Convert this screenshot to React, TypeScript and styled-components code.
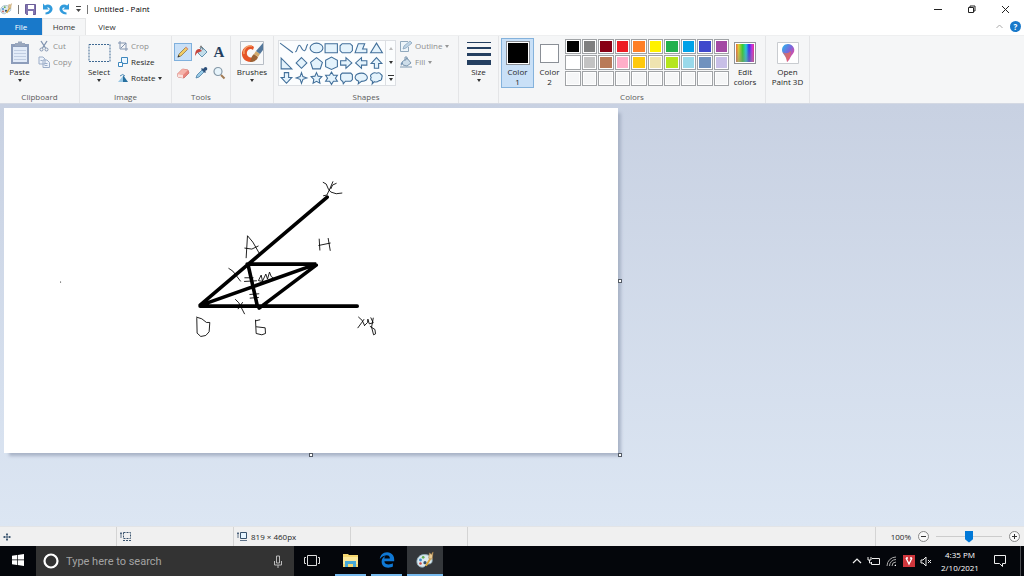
import React from "react";
import styled, { createGlobalStyle } from "styled-components";
import { FaEdgeLegacy } from "react-icons/fa";

const GlobalStyle = createGlobalStyle`
  * { box-sizing: border-box; }
  body { margin: 0; font-family: "Open Sans", "Noto Sans", sans-serif; font-size: 8px; line-height: 10px; color: #262626; }
  button, input { font: inherit; color: inherit; margin: 0; }
  button { padding: 0; border: 0; background: none; }
  svg { display: block; flex: none; }
  h2 { margin: 0; font-weight: 400; }
`;

const Window = styled.div`
  display: flex;
  flex-direction: column;
  min-height: 100vh;
  background: #fff;
`;

const TitleBar = styled.header`
  display: flex;
  align-items: center;
  height: 18px;
  padding-right: 2px;
  background: #fff;
`;

const QuickAccess = styled.div`
  display: flex;
  align-items: center;
  gap: 6px;
  flex: 1;
`;

const Divider = styled.span`
  width: 1px;
  height: 9px;
  background: #777;
`;

const Title = styled.h1`
  margin: 0;
  font-size: 8px;
  font-weight: 400;
  color: #000;
`;

const IconButton = styled.button`
  display: grid;
  place-items: center;
`;

const WindowButton = styled(IconButton)`
  width: 34px;
  height: 16px;
`;

const TabRow = styled.nav`
  display: flex;
  height: 17px;
  align-items: stretch;
`;

const Tab = styled.button<{ $kind?: "file" | "active" }>`
  width: ${(p) => (p.$kind === "active" ? 44 : 42)}px;
  background: ${(p) => (p.$kind === "file" ? "#1979ca" : p.$kind === "active" ? "#f5f6f7" : "transparent")};
  color: ${(p) => (p.$kind === "file" ? "#fff" : "#333")};
  border: solid #e4e5e6;
  border-width: ${(p) => (p.$kind === "active" ? "1px 1px 0" : "0")};
`;

const TabEnd = styled.div`
  display: flex;
  align-items: center;
  gap: 7px;
  margin-left: auto;
  padding-right: 3px;
`;

const HelpButton = styled.button`
  width: 11px;
  height: 11px;
  border-radius: 50%;
  background: #1979ca;
  color: #fff;
  font-weight: 700;
`;

const Ribbon = styled.section`
  display: flex;
  height: 69px;
  background: #f5f6f7;
  border-top: 1px solid #eeeff0;
  border-bottom: 1px solid #d4d9e3;
`;

const Group = styled.section<{ $width: number }>`
  display: flex;
  flex-direction: column;
  flex: none;
  width: ${(p) => p.$width}px;
  padding-top: 2px;
  border-right: 1px solid #e4e5e7;
`;

const GroupBody = styled.div<{ $gap?: number; $center?: boolean }>`
  display: flex;
  flex: 1;
  align-items: flex-start;
  gap: ${(p) => p.$gap ?? 0}px;
  justify-content: ${(p) => (p.$center ? "center" : "flex-start")};
  padding: 0 2px;
`;

const ShapesBody = styled(GroupBody)`
  padding-left: 4px;
`;

const GroupLabel = styled.h2`
  height: 12px;
  font-size: 8px;
  line-height: 11px;
  text-align: center;
  color: #5a5a5a;
`;

const Caret = styled.span`
  width: 0;
  border: 2px solid transparent;
  border-top: 3px solid #333;
  border-bottom: 0;
`;

const BigButton = styled.button<{ $selected?: boolean; $width?: number }>`
  display: flex;
  flex-direction: column;
  align-items: center;
  width: ${(p) => p.$width ?? 36}px;
  height: 50px;
  padding-top: 1px;
  border: 1px solid ${(p) => (p.$selected ? "#84b2dc" : "transparent")};
  background: ${(p) => (p.$selected ? "#c9e0f7" : "transparent")};
  white-space: nowrap;
  ${Caret} { margin-top: 2px; }
`;

const BigIcon = styled.span`
  display: grid;
  place-items: center;
  height: 26px;
  margin-bottom: 1px;
`;

const SmallList = styled.div`
  display: flex;
  flex-direction: column;
`;

const SmallButton = styled.button<{ $muted?: boolean }>`
  display: flex;
  align-items: center;
  gap: 3px;
  height: 16px;
  color: ${(p) => (p.$muted ? "#8d8d8d" : "#262626")};
  white-space: nowrap;
  ${Caret} { opacity: ${(p) => (p.$muted ? 0.5 : 1)}; }
`;

const ToolGrid = styled.div`
  display: grid;
  grid-template-columns: repeat(3, 18px);
  grid-template-rows: 18px 18px;
  row-gap: 3px;
  padding-top: 5px;
`;

const ToolButton = styled(IconButton)<{ $selected?: boolean }>`
  border: 1px solid ${(p) => (p.$selected ? "#7fb0dd" : "transparent")};
  background: ${(p) => (p.$selected ? "#c9e0f7" : "transparent")};
`;

const TextGlyph = styled.span`
  font: 700 15px/16px "Liberation Serif", serif;
  color: #243f60;
`;

const Gallery = styled.div`
  display: flex;
  width: 118px;
  height: 46px;
  margin-top: 2px;
  border: 1px solid #dcdfe3;
  background: #fbfdfe;
`;

const ShapeGrid = styled.div`
  display: grid;
  flex: 1;
  grid-template-columns: repeat(7, 15px);
  grid-auto-rows: 15px;
`;

const GalleryScroll = styled.div`
  display: grid;
  grid-template-rows: repeat(3, 1fr);
  width: 10px;
  border-left: 1px solid #dcdfe3;
`;

const LineStack = styled.span`
  display: flex;
  flex-direction: column;
  gap: 4px;
  width: 24px;
`;

const Line = styled.span<{ $size: number }>`
  height: ${(p) => p.$size}px;
  background: #243f60;
`;

const Swatch = styled.span<{ $color: string; $size: number }>`
  width: ${(p) => p.$size}px;
  height: ${(p) => p.$size}px;
  border: 1px solid #8a8f96;
  background: ${(p) => p.$color};
  box-shadow: inset 0 0 0 1px #fff;
`;

const Palette = styled.div`
  display: grid;
  grid-template-columns: repeat(10, 1fr);
  grid-auto-rows: 15px;
  gap: 1px;
  width: 164px;
  padding-top: 1px;
`;

const PaletteColor = styled.button<{ $color: string }>`
  border: 1px solid #a0a3a6;
  background: ${(p) => p.$color};
  box-shadow: inset 0 0 0 1px #fff;
`;

const Spectrum = styled.span`
  width: 22px;
  height: 22px;
  border: 1px solid #8f9499;
  box-shadow: inset 0 0 0 1px #fff;
  background: linear-gradient(transparent 20%, #8888), linear-gradient(90deg, #e44, #dc3 18%, #3c3 38%, #2cd 55%, #33e 70%, #c3d 86%, #e35);
`;

const Workspace = styled.main`
  flex: 1;
  padding: 4px;
  background: linear-gradient(#c8d1e2, #dce6f3);
`;

const Paper = styled.div`
  position: relative;
  width: 60vw;
  aspect-ratio: 614 / 345;
  background: #fff;
  box-shadow: 4px 4px 3px -1px #a9b4c7;
  > svg { width: 100%; height: 100%; }
`;

const Handle = styled.span<{ $edge: "right" | "bottom" | "corner" }>`
  position: absolute;
  width: 4px;
  height: 4px;
  border: 1px solid #555c66;
  background: #fff;
  left: ${(p) => (p.$edge === "bottom" ? "calc(50% - 2px)" : "100%")};
  top: ${(p) => (p.$edge === "right" ? "calc(50% - 2px)" : "100%")};
`;

const StatusBar = styled.footer`
  display: flex;
  height: 20px;
  background: #f0f0f0;
  border-top: 1px solid #e2e4e7;
`;

const StatusCell = styled.div`
  display: flex;
  align-items: center;
  gap: 4px;
  width: 117px;
  padding-left: 3px;
  border-right: 1px solid #d4d4d4;
`;

const ZoomControls = styled.div`
  display: flex;
  align-items: center;
  gap: 7px;
  margin-left: auto;
  padding: 0 4px 0 15px;
  border-left: 1px solid #d4d4d4;
`;

const ZoomSlider = styled.input`
  appearance: none;
  width: 66px;
  height: 12px;
  background: linear-gradient(#ccc, #ccc) center / 100% 1px no-repeat;
  &::-webkit-slider-thumb {
    appearance: none;
    width: 8px;
    height: 12px;
    background: #0078d7;
    clip-path: polygon(0 0, 100% 0, 100% 72%, 50% 100%, 0 72%);
  }
`;

const TaskBar = styled.footer`
  display: flex;
  height: 30px;
  background: #04060b;
  color: #fff;
`;

const TaskButton = styled(IconButton)<{ $open?: boolean; $active?: boolean }>`
  width: ${(p) => (p.$open && !p.$active ? 31 : 36)}px;
  background: ${(p) => (p.$active ? "#34373b" : "transparent")};
  border-bottom: 2px solid ${(p) => (p.$open ? "#76b9ed" : "transparent")};
`;

const TaskApps = styled.div`
  display: flex;
  gap: 5px;
`;

const Search = styled.label`
  display: flex;
  align-items: center;
  gap: 7px;
  width: 258px;
  padding: 0 11px 0 7px;
  background: #333;
`;

const SearchInput = styled.input`
  flex: 1;
  min-width: 0;
  padding: 0;
  border: 0;
  outline: 0;
  background: none;
  font-family: Roboto, sans-serif;
  font-size: 11px;
  &::placeholder { color: #a3a3a3; opacity: 1; }
`;

const Tray = styled.div`
  display: flex;
  align-items: center;
  gap: 5px;
  margin-left: auto;
  padding-right: 3px;
`;

const Clock = styled.time`
  width: 46px;
  margin-right: 6px;
  text-align: center;
  font-size: 8px;
  line-height: 13px;
`;

const TrayEdge = styled.span`
  align-self: stretch;
  width: 1px;
  margin-left: 9px;
  background: #4a4c50;
`;

type IconProps = { w: number; h?: number; box?: string; children: React.ReactNode };
const Icon = ({ w, h = w, box, children }: IconProps) => (
  <svg width={w} height={h} viewBox={box ?? `0 0 ${w} ${h}`} fill="none" stroke="none" aria-hidden="true">{children}</svg>
);

const PaletteIcon = ({ size }: { size: number }) => (
  <Icon w={size} box="0 0 20 20">
    <path d="M9 4C4 4 1 8 1 12c0 4 3 6 6 6 3 0 3-2 5-3 3-1 6 0 6-5 0-4-4-6-9-6Z" fill="#dce9ef" stroke="#8eabb8" />
    <circle cx="5" cy="10" r="1.6" fill="#3b8ad0" /><circle cx="8" cy="7" r="1.5" fill="#62ad54" />
    <circle cx="5" cy="14" r="1.4" fill="#c94b45" /><circle cx="10" cy="13" r="1.8" fill="#32506a" />
    <path d="m10 16 5-8 2 1-5 8Z" fill="#dba43a" /><path d="m14 8 1-6 2 2 2-3-1 8Z" fill="#e6c993" stroke="#a77d41" strokeWidth=".6" />
  </Icon>
);

const Undo = () => (
  <Icon w={11} h={12}><path d="M1 .5v6h6L5 4.700C7 4 8.300 5.500 7.300 7.300 6.500 8.800 5 9.300 3.500 9.500v2C8 11.500 11 8.500 10.500 5.300 10 1.800 5.700.5 2.900 2.500Z" fill="#319bdc" /></Icon>
);
const Redo = () => (
  <Icon w={11} h={12}><path d="M10 .5v6H4l2-1.800C4 4 2.700 5.500 3.700 7.300c.8 1.500 2.300 2 3.800 2.200v2C3 11.500 0 8.500.5 5.300 1 1.800 5.300.5 8.100 2.500Z" fill="#319bdc" /></Icon>
);

const shapes: { name: string; d: string }[] = [
  { name: "Line", d: "M2 3 14 12" },
  { name: "Curve", d: "M2 11C4 12 4 5 6 5s2 6 5 5c2-1 1-5 3-6" },
  { name: "Oval", d: "M2 7.500a6 4.500 0 1 0 12 0a6 4.500 0 1 0-12 0" },
  { name: "Rectangle", d: "M2 3.500H13.500V12H2Z" },
  { name: "Rounded rectangle", d: "M4 3.500h7.500l2 2V10l-2 2H4L2 10V5.500Z" },
  { name: "Polygon", d: "M5 3.500h6L9 8.500h4V12H2Z" },
  { name: "Triangle", d: "M8 3 13.500 12H2.500Z" },
  { name: "Right triangle", d: "M3 3 13 13H3Z" },
  { name: "Diamond", d: "m8 2.500 5 5-5 5-5-5Z" },
  { name: "Pentagon", d: "M8 2.500 13.500 7l-2 6h-7l-2-6Z" },
  { name: "Hexagon", d: "m2.500 5 5.500-3 5.500 3v6L8 13.500 2.500 11Z" },
  { name: "Right arrow", d: "M2.500 5.500h5v-3l5.500 5-5.500 5v-3h-5Z" },
  { name: "Left arrow", d: "M13 5.500H8v-3l-5.500 5 5.500 5v-3h5Z" },
  { name: "Up arrow", d: "M8 2.500 13 8h-3v4.500H6V8H3Z" },
  { name: "Down arrow", d: "M6 2.500h4V7h3l-5 5.500L3 7h3Z" },
  { name: "Four-point star", d: "m8 2.500 1.300 3.700L13 7.500 9.300 8.800 8 12.500 6.700 8.800 3 7.500l3.700-1.300Z" },
  { name: "Five-point star", d: "m8 2.500 1.500 3.300 3.500.4-2.500 2.600.7 3.700L8 10.700l-3.200 1.800.7-3.700L3 6.200l3.500-.4Z" },
  { name: "Six-point star", d: "m8 2 1.800 3h3.700l-1.800 2.700 1.800 2.800H9.800L8 13.500l-1.800-3H2.500l1.800-2.800L2.500 5h3.700Z" },
  { name: "Rounded callout", d: "M4 3h8l1.500 1.500V9L12 10.500H7L5 13l-.5-2.500H4L2.500 9V4.500Z" },
  { name: "Oval callout", d: "M5 13l.4-2.500C-.5 8.500 2 3 8 3s8.500 7.500 0 7.700Z" },
  { name: "Cloud callout", d: "M4 3.500q2-1.500 4-.5 3-1 4 1 2 1 1 3 0 3-2.500 3Q8 12 6 11l-2 2 .4-2.500Q1.500 9.500 3 7 1.500 5 4 3.500Z" },
];

const paletteColors = [
  "#000000", "#7f7f7f", "#880015", "#ed1c24", "#ff7f27", "#fff200", "#22b14c", "#00a2e8", "#3f48cc", "#a349a4",
  "#ffffff", "#c3c3c3", "#b97a57", "#ffaec9", "#ffc90e", "#efe4b0", "#b5e61d", "#99d9ea", "#7092be", "#c8bfe7",
  ...Array(10).fill("#f5f6f7"),
];

const Drawing = () => (
  <svg viewBox="4 108 614 345" role="img" aria-label="Angle xOy with parallelogram OAHB" fill="none" stroke="#000" strokeLinecap="round">
    <path strokeWidth="3.600" d="M200 305 327 197M200 306H357M247 264H316L201 305M248 265 257 305M316 265 259 308" />
    <g transform="translate(180 170) scale(.33333)" strokeWidth="2.600" strokeLinejoin="round">
      <path d="M198 263 202 197 218 216 237 249M194 234 215 237 234 228" />
      <path d="M429 37 438 42 445 58 452 66 468 71 485 69M430 77 440 75 450 54 458 35M468 40 457 45 452 56" />
      <path d="M417 207 419 240M416 226 450 219M444 205 450 241" />
      <path d="M146 295 158 303 181 333M181 299 170 311 158 324M194 323H219M193 334 229 332" />
      <path d="M235 331 243 315 247 333 257 312 262 327 268 306 273 319 284 327M237 332 248 334" />
      <path d="M209 373 236 371M210 384 235 382M166 388 176 398 193 431M187 397 174 416" />
      <path d="M50 445 51 489 62 499 77 496 87 485 89 457 79 457 65 446 49 441" />
      <path d="M226 450 228 490 245 494 256 490 255 473 229 470M227 452 239 449" />
      <path d="M535 441 546 451 553 466M551 448 544 458 533 473M553 466 562 457 563 447 567 461 579 458 572 443M579 444 574 471 580 494 586 491 584 478 570 469" />
    </g>
    <path strokeWidth="1" d="M60.500 282h.1" />
  </svg>
);

export default function App() {
  return (
    <>
      <GlobalStyle />
      <Window>
        <TitleBar>
          <QuickAccess>
            <PaletteIcon size={12} />
            <Divider />
            <IconButton aria-label="Save"><Icon w={11}><path d="M.5.5h10v10h-9l-1-1Z" fill="#8174ae" stroke="#6c5e9a" /><path d="M3 1h6v4H3ZM3 7h5v4H3Z" fill="#fff" /></Icon></IconButton>
            <IconButton aria-label="Undo"><Undo /></IconButton>
            <IconButton aria-label="Redo"><Redo /></IconButton>
            <IconButton aria-label="Customize toolbar"><Icon w={5} h={6}><path d="M0 .5h5" stroke="#444" /><path d="m0 3 2.500 3L5 3Z" fill="#444" /></Icon></IconButton>
            <Divider />
            <Title>Untitled - Paint</Title>
          </QuickAccess>
          <WindowButton aria-label="Minimize"><Icon w={9}><path d="M1 4.500h8" stroke="#222" /></Icon></WindowButton>
          <WindowButton aria-label="Restore"><Icon w={9}><path d="M1.500 2.500h5v5h-5ZM3 2V1h5v5H7" stroke="#222" /></Icon></WindowButton>
          <WindowButton aria-label="Close"><Icon w={9}><path d="m1 1 7 7M8 1 1 8" stroke="#222" /></Icon></WindowButton>
        </TitleBar>
        <TabRow>
          <Tab $kind="file">File</Tab>
          <Tab $kind="active">Home</Tab>
          <Tab>View</Tab>
          <TabEnd>
            <IconButton aria-label="Collapse ribbon"><Icon w={7} h={5}><path d="m.5 4 3-3 3 3" stroke="#aaa" /></Icon></IconButton>
            <HelpButton aria-label="Help">?</HelpButton>
          </TabEnd>
        </TabRow>

        <Ribbon>
          <Group $width={80}>
            <GroupBody $gap={1}>
              <BigButton $width={35}>
                <BigIcon>
                  <Icon w={20} h={24}>
                    <path d="M1 3h18v20H1Z" fill="#8d9dba" /><path d="M3 6h14v15H3Z" fill="#e2ebf8" />
                    <path d="M4 9.500h12M4 12.500h12M4 15.500h12M4 18.500h12" stroke="#c0cde2" /><path d="M5 2h3V.5h4V2h3v3H5Z" fill="#9aa7bd" />
                  </Icon>
                </BigIcon>
                Paste<Caret />
              </BigButton>
              <SmallList>
                <SmallButton $muted><Icon w={12}><path d="M3 1 7.500 8M9 1 4.500 8" stroke="#8093af" strokeWidth="1.300" /><circle cx="3.500" cy="9.500" r="1.500" stroke="#8093af" /><circle cx="8.500" cy="9.500" r="1.500" stroke="#8093af" /></Icon>Cut</SmallButton>
                <SmallButton $muted><Icon w={12}><path d="M1 1h4l2 2v5H1ZM5 4h4l2.500 2.500v5H5Z" fill="#edf2fa" stroke="#9badc8" /><path d="M6.500 7.500h3M6.500 9.500h3M2.500 4.500h2" stroke="#9badc8" /></Icon>Copy</SmallButton>
              </SmallList>
            </GroupBody>
            <GroupLabel>Clipboard</GroupLabel>
          </Group>

          <Group $width={92}>
            <GroupBody $gap={2}>
              <BigButton $width={34}>
                <BigIcon><Icon w={23} h={20}><path d="M1 1.500h21v17H1Z" stroke="#416b94" strokeDasharray="2 1" /></Icon></BigIcon>
                Select<Caret />
              </BigButton>
              <SmallList>
                <SmallButton $muted><Icon w={10}><path d="M2 0v8h8M0 2h8v8M3 7l5-5" stroke="#8093af" /></Icon>Crop</SmallButton>
                <SmallButton><Icon w={10}><path d="M3.500.5h6v6h-6Z" fill="#eaf6ff" stroke="#3d87bd" /><path d="M.5 5.500h4v4h-4Z" fill="#fff" stroke="#3d87bd" /></Icon>Resize</SmallButton>
                <SmallButton><Icon w={10}><path d="M0 9h5V3Z" fill="#9bc9e6" /><path d="M5 9V2l5 7Z" fill="#27709f" /><path d="M2 3q3-3 5 0" stroke="#4a89b5" /></Icon>Rotate<Caret /></SmallButton>
              </SmallList>
            </GroupBody>
            <GroupLabel>Image</GroupLabel>
          </Group>

          <Group $width={59}>
            <GroupBody>
              <ToolGrid>
                <ToolButton $selected aria-label="Pencil"><Icon w={14}><path d="m2 12 1-3 7-7 2 2-7 7Z" fill="#f2cc62" stroke="#816c42" strokeWidth=".7" /><path d="m9 2.500 1-1L12.500 4l-1 1Z" fill="#de9c84" /><path d="m1.500 12.500 1-2.500 1.500 1.500Z" fill="#343434" /></Icon></ToolButton>
                <ToolButton aria-label="Fill with color"><Icon w={14}><path d="m4 6 4-4 5 5-5 5-4-4Z" fill="#c2ddea" stroke="#6494b1" /><path d="M6 3 7 .8l2 4" stroke="#777" /><path d="M6 4Q1 3 1 11l2-3 5-2Z" fill="#c6443b" /></Icon></ToolButton>
                <ToolButton aria-label="Text"><TextGlyph>A</TextGlyph></ToolButton>
                <ToolButton aria-label="Eraser"><Icon w={14}><path d="m1.500 8 5-5L12 4l1 3-5 5-6-1Z" fill="#e9857d" stroke="#c7645f" strokeWidth=".7" /><path d="m1.500 8 5-5L12 4 7 9Z" fill="#f5b3aa" /><path d="m1.500 8 5.500 1v3l-5-1Z" fill="#fae3df" /></Icon></ToolButton>
                <ToolButton aria-label="Color picker"><Icon w={14}><path d="m2 12 1-3 5-5 2 2-5 5Z" fill="#9acbe7" stroke="#497da5" strokeWidth=".8" /><path d="m7 3 1-1 1 1 2-2q3 0 2 3l-2 1 1 1-1 1Z" fill="#2c4f79" /></Icon></ToolButton>
                <ToolButton aria-label="Magnifier"><Icon w={14}><circle cx="6" cy="5.500" r="4" fill="#e7f4fb" stroke="#8598a7" strokeWidth="1.200" /><path d="m9 9 3.500 3.500" stroke="#a17b55" strokeWidth="2" /></Icon></ToolButton>
              </ToolGrid>
            </GroupBody>
            <GroupLabel>Tools</GroupLabel>
          </Group>

          <Group $width={43}>
            <GroupBody $center>
              <BigButton>
                <BigIcon>
                  <Icon w={24}>
                    <path d="M.5.5h23v23H.5Z" fill="#f8f9fa" stroke="#b7bdc5" />
                    <path d="M14 6C9 2 1 7 2 14c1 6 8 9 13 5v-3c-5 2-9-1-8-5 1-3 4-4 6-2Z" fill="#e65427" /><path d="M12 5C6 4 3 9 4 13" stroke="#f3a06c" strokeWidth="1.500" />
                    <path d="M9 21c3-1 1-5 5-8l4 3c-1 4-5 5-9 5Z" fill="#9b6335" /><path d="m14 13 2-3 4 3-2 3Z" fill="#d3aa6c" /><path d="m16 10 7-8v7l-3 4Z" fill="#53779b" />
                  </Icon>
                </BigIcon>
                Brushes<Caret />
              </BigButton>
            </GroupBody>
          </Group>

          <Group $width={185}>
            <ShapesBody $gap={4}>
              <Gallery>
                <ShapeGrid>
                  {shapes.map((s, i) => (
                    <IconButton key={s.name} aria-label={s.name}>
                      <Icon w={15} box="1 1 14 14"><path d={s.d} fill={i < 2 ? "none" : "#e4f3fc"} stroke="#416f9a" /></Icon>
                    </IconButton>
                  ))}
                </ShapeGrid>
                <GalleryScroll>
                  <IconButton aria-label="Scroll up"><Icon w={4} h={3}><path d="m0 3 2-3 2 3Z" fill="#bbb" /></Icon></IconButton>
                  <IconButton aria-label="Scroll down"><Caret /></IconButton>
                  <IconButton aria-label="More shapes"><Icon w={6} h={6}><path d="M0 .5h6" stroke="#333" /><path d="m1 3 2 3 2-3Z" fill="#333" /></Icon></IconButton>
                </GalleryScroll>
              </Gallery>
              <SmallList>
                <SmallButton $muted><Icon w={12}><path d="M8 1.500H.5v10h8V7" fill="#edf5fa" stroke="#91a9bd" /><path d="m3 9 1-3 6-5 2 2-6 5Z" fill="#bfd5e6" stroke="#819eb7" strokeWidth=".7" /></Icon>Outline<Caret /></SmallButton>
                <SmallButton $muted><Icon w={12}><path d="m2 6 5-4 4 5-4 3-4-1Z" fill="#cedeea" stroke="#7d98b1" /><path d="M5 5V1h2v3M0 11h12" stroke="#7d98b1" /><path d="M2 6Q0 7 1 10l2-3Z" fill="#7896b4" /></Icon>Fill<Caret /></SmallButton>
              </SmallList>
            </ShapesBody>
            <GroupLabel>Shapes</GroupLabel>
          </Group>

          <Group $width={40}>
            <GroupBody $center>
              <BigButton>
                <BigIcon><LineStack><Line $size={1} /><Line $size={2} /><Line $size={3} /><Line $size={5} /></LineStack></BigIcon>
                Size<Caret />
              </BigButton>
            </GroupBody>
          </Group>

          <Group $width={267}>
            <GroupBody>
              <BigButton $selected $width={33}><BigIcon><Swatch $color="#000" $size={24} /></BigIcon>Color<span>1</span></BigButton>
              <BigButton $width={31}><BigIcon><Swatch $color="#fff" $size={19} /></BigIcon>Color<span>2</span></BigButton>
              <Palette>
                {paletteColors.map((c, i) => <PaletteColor key={i} $color={c} aria-label={`Palette color ${i + 1}`} />)}
              </Palette>
              <BigButton $width={32}><BigIcon><Spectrum /></BigIcon>Edit<span>colors</span></BigButton>
            </GroupBody>
            <GroupLabel>Colors</GroupLabel>
          </Group>

          <Group $width={44}>
            <GroupBody $center>
              <BigButton>
                <BigIcon>
                  <Icon w={22}>
                    <defs>
                      <linearGradient id="drop" x1="0" y1="0" x2="1" y2="1"><stop stopColor="#21bdf0" /><stop offset=".45" stopColor="#7869dc" /><stop offset=".75" stopColor="#db4ba5" /><stop offset="1" stopColor="#f28b30" /></linearGradient>
                    </defs>
                    <path d="M.5.5h21v21H.5Z" fill="#fff" stroke="#c9ccd0" />
                    <path d="M11 2C7 2 5 5 5 8c0 4 5 6 5 12 3-2 3-5 5-7 5-5 1-11-4-11Z" fill="url(#drop)" /><path d="M5.500 10Q10 13 14 9l-1 6-3 5q0-4-4.500-10Z" fill="#ed704d" opacity=".7" />
                  </Icon>
                </BigIcon>
                Open<span>Paint 3D</span>
              </BigButton>
            </GroupBody>
          </Group>
        </Ribbon>

        <Workspace>
          <Paper>
            <Drawing />
            <Handle $edge="right" /><Handle $edge="bottom" /><Handle $edge="corner" />
          </Paper>
        </Workspace>

        <StatusBar>
          <StatusCell><Icon w={8}><path d="M4 0v8M0 4h8M3 1.500h2M3 6.500h2M1.500 3v2M6.500 3v2" stroke="#38526d" strokeWidth=".9" /></Icon></StatusCell>
          <StatusCell><Icon w={11} h={9}><path d="M1 0v6M0 1.500h2" stroke="#38526d" strokeWidth=".8" /><path d="M3.500.5h7v6h-7ZM3 8.500h8" stroke="#38526d" strokeDasharray="2 1" /></Icon></StatusCell>
          <StatusCell><Icon w={10} h={9}><path d="M1 0v6M0 1.500h2M3 8.500h7" stroke="#38526d" strokeWidth=".8" /><path d="M3.500.5h6v6h-6Z" fill="#e6f5ff" stroke="#38526d" /></Icon>819 × 460px</StatusCell>
          <StatusCell />
          <ZoomControls>
            <span>100%</span>
            <IconButton aria-label="Zoom out"><Icon w={11}><circle cx="5.500" cy="5.500" r="5" fill="#fafafa" stroke="#888" /><path d="M3 5.500h5" stroke="#333" /></Icon></IconButton>
            <ZoomSlider type="range" aria-label="Zoom" min="0" max="100" defaultValue="50" />
            <IconButton aria-label="Zoom in"><Icon w={11}><circle cx="5.500" cy="5.500" r="5" fill="#fafafa" stroke="#888" /><path d="M3 5.500h5M5.500 3v5" stroke="#333" /></Icon></IconButton>
          </ZoomControls>
        </StatusBar>

        <TaskBar>
          <TaskButton aria-label="Start"><Icon w={12}><path d="M0 1.700 5 1v4.600H0ZM5.700.9 12 0v5.600H5.700ZM0 6.300h5V11l-5-.7ZM5.700 6.300H12V12l-6.300-.9Z" fill="#fff" /></Icon></TaskButton>
          <Search>
            <Icon w={16}><circle cx="8" cy="8" r="6.500" stroke="#fff" strokeWidth="2.200" /></Icon>
            <SearchInput type="text" placeholder="Type here to search" aria-label="Search" />
            <Icon w={10} h={13}><path d="M3.500 1h3v7h-3ZM1.500 6v4h7V6M5 10v3" stroke="#bbb" /></Icon>
          </Search>
          <TaskApps>
            <TaskButton aria-label="Task view"><Icon w={16} h={11}><path d="M3.500.5h9v10h-9ZM2 2.500H.5v6H2M14 2.500h1.500v6H14" stroke="#ddd" /></Icon></TaskButton>
            <TaskButton $open aria-label="File Explorer"><Icon w={17} h={15}><path d="M1 1h5l1 1h9v12H1Z" fill="#f5d66f" /><path d="M1 4h15v7H1Z" fill="#fbe89b" /><path d="M3 8h11v6h-3v-3H6v3H3Z" fill="#47a9d7" /></Icon></TaskButton>
            <TaskButton $open aria-label="Edge"><FaEdgeLegacy size={16} color="#0f78d4" /></TaskButton>
            <TaskButton $open $active aria-label="Paint"><PaletteIcon size={18} /></TaskButton>
          </TaskApps>
          <Tray>
            <IconButton aria-label="Show hidden icons"><Icon w={10} h={6}><path d="m1 5 4-4 4 4" stroke="#eee" strokeWidth="1.200" /></Icon></IconButton>
            <Icon w={14} h={10}><path d="M5 2.500h7.500v6h-8V6M1 1v3h3V1M2.500 4v3H5" stroke="#eee" /></Icon>
            <Icon w={12} h={11}><path d="M1 10A9 9 0 0 1 10 1M3.500 10A6.500 6.500 0 0 1 10 3.500M6 10a4 4 0 0 1 4-4" stroke="#aaa" /><path d="M8.500 10A1.500 1.500 0 0 1 10 8.500V10Z" fill="#fff" /></Icon>
            <Icon w={12}><path d="M0 0h12v12H0Z" fill="#cf363c" /><path d="m3 3 3 6 3-6M3 3h2M7 3h2" stroke="#fff" strokeWidth="1.300" /></Icon>
            <Icon w={12} h={11}><path d="M1 4h2l3-3v9L3 7H1Z" stroke="#eee" /><path d="m8 4 3 3m0-3L8 7" stroke="#eee" /></Icon>
            <Clock>4:35 PM<br />2/10/2021</Clock>
            <IconButton aria-label="Notifications"><Icon w={12} h={12}><path d="M.5.5h11v8h-3v3l-3-3h-5Z" stroke="#eee" /></Icon></IconButton>
            <TrayEdge />
          </Tray>
        </TaskBar>
      </Window>
    </>
  );
}
